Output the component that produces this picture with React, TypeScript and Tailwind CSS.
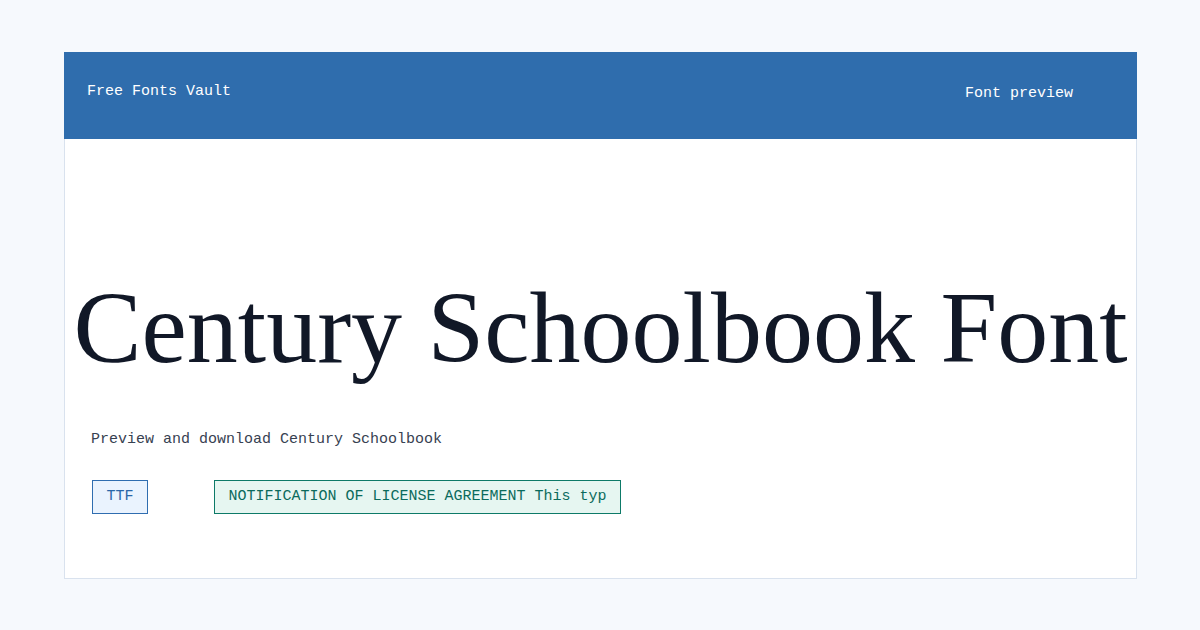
const mono = { fontFamily: '"Liberation Mono", "DejaVu Sans Mono", monospace' };

function Badge({ label, tone }: { label: string; tone: 'blue' | 'green' }) {
  const toneClass =
    tone === 'blue'
      ? 'border-[#2f6db0] bg-[#eaf3fe] text-[#2a66a8]'
      : 'border-[#0d7a68] bg-[#e6f6f1] text-[#0b6b5c]';
  return (
    <span className={`inline-block border px-[13.5px] py-[5px] text-[15px] leading-[22px] whitespace-nowrap ${toneClass}`}>
      {label}
    </span>
  );
}

export default function App() {
  return (
    <main className="min-h-[630px] w-full bg-[#f6f9fd] pl-16 pt-[52px]" style={mono}>
      <div className="flex h-[527px] w-[1073px] flex-col">
        <header className="flex h-[87px] items-start justify-between bg-[#2f6dad] pl-[23px] pr-[64px] text-[15px] leading-[22px] text-white">
          <span className="mt-[29px]">Free Fonts Vault</span>
          <nav className="mt-[31px]">
            <span>Font preview</span>
          </nav>
        </header>

        <section className="flex flex-1 flex-col border border-t-0 border-[#d9e2ee] bg-white px-[26px]">
          <div className="mt-[134px] flex h-[110px] items-center justify-center">
            <h1
              className="whitespace-nowrap text-[102px] leading-none text-[#111827]"
              style={{ fontFamily: '"Liberation Serif", "DejaVu Serif", serif' }}
            >
              Century Schoolbook Font
            </h1>
          </div>
          <p className="mt-[46px] text-[15px] leading-[22px] text-[#374151]">
            Preview and download Century Schoolbook
          </p>
          <div className="mt-[29px] flex items-start pl-px">
            <Badge label="TTF" tone="blue" />
            <div className="ml-[66px]">
              <Badge label="NOTIFICATION OF LICENSE AGREEMENT This typ" tone="green" />
            </div>
          </div>
        </section>
      </div>
    </main>
  );
}
